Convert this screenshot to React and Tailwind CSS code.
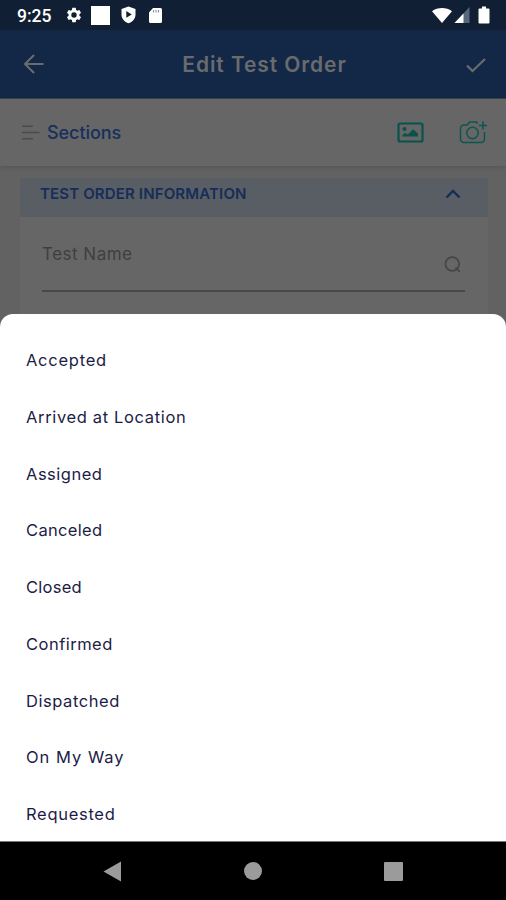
import React from "react";

const statuses = [
  { label: "Accepted", spacing: "tracking-[0.74px]" },
  { label: "Arrived at Location", spacing: "tracking-[0.65px]" },
  { label: "Assigned", spacing: "tracking-[0.5px]" },
  { label: "Canceled", spacing: "tracking-[0.33px]" },
  { label: "Closed", spacing: "tracking-[0.25px]" },
  { label: "Confirmed", spacing: "tracking-[0.48px]" },
  { label: "Dispatched", spacing: "tracking-[0.55px]" },
  { label: "On My Way", spacing: "tracking-[1px]" },
  { label: "Requested", spacing: "tracking-[0.7px]" },
];

const StatusBar = () => {
  return (
    <div className="flex h-[30px] items-center justify-between bg-[#101f33] pr-[16px] pl-[17px] text-white">
      <div className="flex items-center">
        <span className="w-[48px] pt-px font-[Roboto,sans-serif] text-[17.5px] leading-[30px] font-medium">9:25</span>
        <svg className="size-[18px]" viewBox="0 0 24 24" fill="currentColor">
          <path d="M19.14 12.94c.04-.3.06-.61.06-.94s-.02-.64-.07-.94l2.03-1.58a.49.49 0 0 0 .12-.61l-1.92-3.32a.49.49 0 0 0-.59-.22l-2.39.96a7 7 0 0 0-1.62-.94l-.36-2.54a.48.48 0 0 0-.48-.41h-3.84a.47.47 0 0 0-.47.41l-.36 2.54c-.59.24-1.13.57-1.62.94l-2.39-.96a.48.48 0 0 0-.59.22L2.74 8.87a.48.48 0 0 0 .12.61l2.03 1.58a6 6 0 0 0-.02 1.88l-2.03 1.58a.49.49 0 0 0-.12.61l1.92 3.32c.12.22.37.29.59.22l2.39-.96c.5.38 1.03.7 1.62.94l.36 2.54c.05.24.24.41.48.41h3.84c.24 0 .44-.17.47-.41l.36-2.54a7 7 0 0 0 1.62-.94l2.39.96c.22.08.47 0 .59-.22l1.92-3.32a.47.47 0 0 0-.12-.61zM12 15.6a3.6 3.6 0 1 1 0-7.2 3.6 3.6 0 0 1 0 7.2" />
        </svg>
        <span className="ml-[8px] h-[19px] w-[19px] bg-white" />
        <svg className="ml-[10px] h-[18px] w-[17px]" viewBox="0 0 17 18">
          <path d="M8.5.5 15.5 3v5.5c0 4-3 7.500-7 8.800-4-1.300-7-4.800-7-8.800V3Z" fill="currentColor" />
          <path d="M6.300 5v6.800l5.500-3.400Z" fill="#101f33" />
        </svg>
        <svg className="ml-[11px] h-[17px] w-[15px]" viewBox="0 0 15 17">
          <path d="M5 1h7.500A1.500 1.500 0 0 1 14 2.500v12a1.500 1.500 0 0 1-1.500 1.500h-10A1.500 1.500 0 0 1 1 14.500V5.500Z" fill="currentColor" />
          <path d="M5.500 3v2.500M8 3v2.500M10.500 3v2.500" stroke="#8d97a3" strokeWidth="1.200" />
        </svg>
      </div>
      <div className="flex items-center">
        <svg className="h-[17px] w-[20px]" viewBox="0 0 20 17">
          <path d="M0 4.200C5.500-.2 14.500-.2 20 4.200L10 16Z" fill="currentColor" />
        </svg>
        <svg className="ml-[2px] h-[16px] w-[16px]" viewBox="0 0 16 16">
          <path d="M15.500 0v16H.5Z" fill="#59677a" />
          <path d="M9.500 6.400V16H.5Z" fill="currentColor" />
        </svg>
        <svg className="ml-[8px] h-[18px] w-[12px]" viewBox="0 0 12 18">
          <path d="M4 .5h4v2h2.500a1 1 0 0 1 1 1v13a1 1 0 0 1-1 1h-9a1 1 0 0 1-1-1v-13a1 1 0 0 1 1-1H4Z" fill="currentColor" />
        </svg>
      </div>
    </div>
  );
};

const Header = () => {
  return (
    <div className="flex h-[69px] items-center justify-between border-b border-[#3c4654] bg-[#132747] pr-[20px] pl-[23px] text-[#6a6b6d]">
      <svg className="h-[20px] w-[21px]" viewBox="0 0 21 20" fill="none" stroke="currentColor" strokeWidth="2">
        <path d="M20.500 10H2M11 1 2 10l9 9" />
      </svg>
      <h1 className="ml-[19px] pt-[2px] text-[21px] leading-[30px] font-semibold tracking-[0.9px] whitespace-nowrap">Edit Test Order</h1>
      <svg className="mt-px h-[16px] w-[20px]" viewBox="0 0 20 16" fill="none" stroke="currentColor" strokeWidth="2.200">
        <path d="m1 8.500 5.500 5.500L19 2" />
      </svg>
    </div>
  );
};

const SectionsBar = () => {
  return (
    <div className="relative flex h-[67px] items-center bg-[#666666] pr-[19px] pl-[22px] shadow-[0_1px_5px_rgba(0,0,0,0.15)]">
      <svg className="h-[15px] w-[18px]" viewBox="0 0 18 15" fill="none" stroke="#4b4b4b" strokeWidth="1.500">
        <path d="M0 1.300h11M0 7.500h17.500M0 13.700h11" />
      </svg>
      <span className="ml-[7px] flex-1 text-[18px] font-medium tracking-[-0.05px] text-[#172f5c]">Sections</span>
      <svg className="h-[21px] w-[27px]" viewBox="0 0 27 21">
        <rect x="1.500" y="1.500" width="24" height="18" rx="1.500" fill="none" stroke="#07534d" strokeWidth="2.200" />
        <circle cx="7.500" cy="7" r="2" fill="#07534d" />
        <path d="M5.500 14.500v-1.500l2.500-2 3 1.500L16 7.300l5 4.200v3Z" fill="#07534d" />
      </svg>
      <svg className="mb-[2px] ml-[35px] h-[24px] w-[28px]" viewBox="0 0 28 24" fill="none" stroke="#0d5650" strokeWidth="1.500">
        <path d="M18.500 3.500 17.500 2h-7L8.300 5H5a3.500 3.500 0 0 0-3.500 3.500V19A3.500 3.500 0 0 0 5 22.500h17a3.500 3.500 0 0 0 3.500-3.500v-7" />
        <circle cx="13.500" cy="13" r="5.700" />
        <path d="M24 1.500v8M20 5.500h8" strokeWidth="1.700" />
      </svg>
    </div>
  );
};

const TestOrderCard = () => {
  return (
    <div className="mt-[12px] mr-[18px] ml-[20px] h-[148px] bg-[#666666]">
      <div className="flex h-[39px] items-center justify-between bg-[#595e64] pr-[27px] pb-[7px] pl-[20px] text-[#162d59]">
        <h2 className="text-[15px] font-semibold tracking-[0.15px]">TEST ORDER INFORMATION</h2>
        <svg className="h-[10px] w-[16px]" viewBox="0 0 16 10" fill="none" stroke="currentColor" strokeWidth="2.400">
          <path d="m1.500 8.500 6.500-6.500 6.500 6.500" />
        </svg>
      </div>
      <div className="mr-[23px] ml-[22px] flex h-[75px] justify-between border-b-2 border-[#484848] pt-[24px]">
        <span className="text-[17px] leading-[26px] tracking-[0.5px] text-[#3f3f3f]">Test Name</span>
        <svg className="mt-[15px] mr-[4px] size-[17px]" viewBox="0 0 17 17" fill="none" stroke="#464646" strokeWidth="1.700">
          <circle cx="8.300" cy="8" r="6.800" />
          <path d="m11.500 11.500 4.300 4.300" />
        </svg>
      </div>
    </div>
  );
};

const StatusSheet = () => {
  return (
    <ul className="absolute inset-x-0 top-[314px] h-[527px] rounded-t-[13px] bg-white pt-[18px]">
      {statuses.map((status) => (
        <li key={status.label} className="flex h-[56.75px] items-center pl-[26px] text-[16.500px] text-[#1c1c46]">
          <span className={status.spacing}>{status.label}</span>
        </li>
      ))}
    </ul>
  );
};

const NavBar = () => {
  return (
    <div className="flex h-[59px] items-center justify-between border-t border-[#777777] bg-black pr-[103px] pl-[103px]">
      <svg className="h-[21px] w-[18px]" viewBox="0 0 18 21">
        <path d="M18 .5v20L.5 10.500Z" fill="#9b9b9b" />
      </svg>
      <span className="size-[18px] rounded-full bg-[#9b9b9b]" />
      <span className="size-[19px] rounded-[1px] bg-[#9b9b9b]" />
    </div>
  );
};

const App = () => {
  return (
    <div className="relative flex h-[900px] w-[506px] flex-col overflow-hidden bg-[#626262] font-[Inter,sans-serif]">
      <StatusBar />
      <Header />
      <main className="flex-1">
        <SectionsBar />
        <TestOrderCard />
      </main>
      <StatusSheet />
      <NavBar />
    </div>
  );
};

export default App;
